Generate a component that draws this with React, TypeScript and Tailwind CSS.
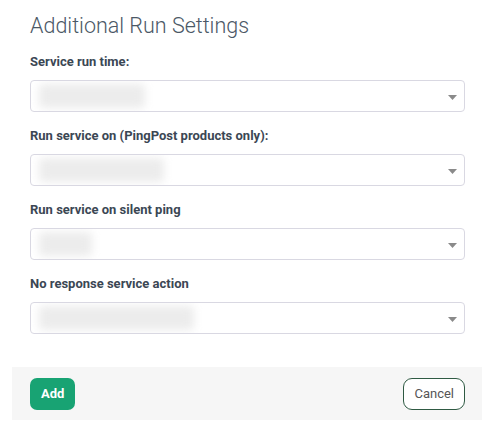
import React from 'react';

interface FieldProps {
  label: string;
  blurWidth: number;
}

const fields: FieldProps[] = [
  { label: 'Service run time:', blurWidth: 106 },
  { label: 'Run service on (PingPost products only):', blurWidth: 125 },
  { label: 'Run service on silent ping', blurWidth: 53 },
  { label: 'No response service action', blurWidth: 155 },
];

const SelectField: React.FC<FieldProps> = ({ label, blurWidth }) => (
  <div className="flex flex-col">
    <label className="text-[13px] font-bold text-[#3b4754] leading-4 h-4 mb-[10px]">{label}</label>
    <div className="relative h-[32px] w-[435px] rounded-[4px] border border-[#d9d8e2] bg-white flex items-center pl-[8px] overflow-hidden">
      {/* value is blurred in the reference */}
      <div
        className="h-[24px] rounded-sm bg-[#ececec] blur-[4px]"
        style={{ width: blurWidth }}
      />
      <svg className="absolute right-[7px] top-[14px]" width="9" height="5" viewBox="0 0 9 5">
        <path d="M0 0 L9 0 L4.5 5 Z" fill="#8a8a8a" />
      </svg>
    </div>
  </div>
);

const App: React.FC = () => {
  return (
    <div className="w-[490px] h-[433px] bg-white" style={{ fontFamily: 'Roboto, "Liberation Sans", sans-serif' }}>
      <div className="px-[30px] pt-[13px]">
        <h2 className="text-[21.5px] font-light text-[#4b5866] leading-[26px]">Additional Run Settings</h2>
        <div className="mt-[15px] flex flex-col gap-[16px]">
          {fields.map((f) => (
            <SelectField key={f.label} {...f} />
          ))}
        </div>
      </div>
      <div className="mt-[33px] ml-[12px] w-[470px] h-[53px] bg-[#f6f6f6] flex items-center justify-between pl-[18px] pr-[17px]">
        <button className="h-[32px] px-[11px] rounded-[7px] bg-[#18a373] text-white text-[13px] font-bold">Add</button>
        <button className="h-[32px] px-[10px] rounded-[9px] border border-[#2f5a43] bg-white text-[#555] text-[13px]">Cancel</button>
      </div>
    </div>
  );
};

export default App;
